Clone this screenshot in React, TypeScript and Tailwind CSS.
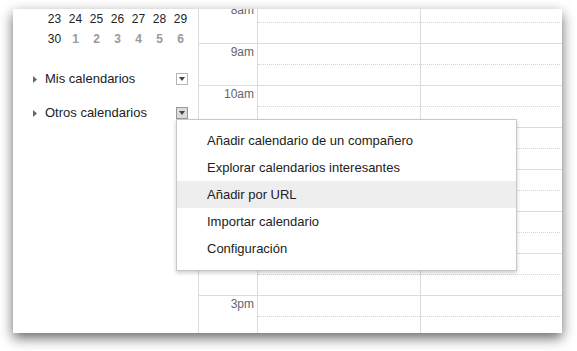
import React from "react";

const hours = ["8am", "9am", "10am", "11am", "12pm", "1pm", "2pm", "3pm"];

const menuItems = [
  "Añadir calendario de un compañero",
  "Explorar calendarios interesantes",
  "Añadir por URL",
  "Importar calendario",
  "Configuración",
];

const week1 = ["23", "24", "25", "26", "27", "28", "29"];
const week2 = ["30", "1", "2", "3", "4", "5", "6"];

function DropButton({ active }: { active?: boolean }) {
  return (
    <div
      className={
        "w-[12px] h-[12px] border flex items-center justify-center " +
        (active ? "bg-[#dcdcdc] border-[#999]" : "bg-white border-[#b5b5b5]")
      }
    >
      <svg width="6" height="4" viewBox="0 0 6 4">
        <path d="M0 0 L6 0 L3 4 Z" fill="#444" />
      </svg>
    </div>
  );
}

function Section({ label, active }: { label: string; active?: boolean }) {
  return (
    <div className="flex items-center h-[20px] pl-[20px] pr-[10px]">
      <svg width="4" height="7" viewBox="0 0 4 7" className="mr-[8px]">
        <path d="M0 0 L4 3.5 L0 7 Z" fill="#666" />
      </svg>
      <span className="text-[13px] text-[#222] flex-1">{label}</span>
      <DropButton active={active} />
    </div>
  );
}

export default function App() {
  return (
    <div
      className="w-[577px] h-[351px] bg-white pt-[9px] pl-[13px] overflow-hidden"
      style={{ fontFamily: '"Liberation Sans", Arial, sans-serif' }}
    >
      <div className="relative w-[549px] h-[324px] bg-white overflow-hidden shadow-[0_5px_12px_rgba(0,0,0,0.6)] flex">
        {/* sidebar */}
        <div className="w-[186px] border-r border-[#dcdcdc] shrink-0">
          <div className="pl-[31px]">
            <div className="grid grid-cols-7 w-[147px] text-[12px] leading-[20px] text-center text-[#222]">
              {week1.map((d) => (
                <span key={d}>{d}</span>
              ))}
              {week2.map((d, i) => (
                <span key={d} className={i === 0 ? "" : "font-bold text-[#9a9a9a]"}>
                  {d}
                </span>
              ))}
            </div>
          </div>
          <div className="mt-[20px] flex flex-col gap-[14px]">
            <Section label="Mis calendarios" />
            <Section label="Otros calendarios" active />
          </div>
        </div>

        {/* time grid */}
        <div className="flex-1 -mt-[8px]">
          {hours.map((h) => (
            <div key={h} className="flex h-[42px] border-t border-[#dcdcdc]">
              <div className="w-[59px] shrink-0 border-r border-[#dcdcdc] text-right pr-[3px] pt-[1px] text-[12px] leading-[14px] text-[#666]">
                {h}
              </div>
              <div className="w-[163px] shrink-0 border-r border-[#dcdcdc] flex flex-col">
                <div className="h-[21px] border-b border-dotted border-[#d6d6d6]" />
              </div>
              <div className="flex-1 flex flex-col mr-[2px]">
                <div className="h-[21px] border-b border-dotted border-[#d6d6d6]" />
              </div>
            </div>
          ))}
        </div>

        {/* dropdown menu */}
        <div className="absolute z-10 left-[163px] top-[110px] w-[341px] bg-white border border-[#c8c8c8] shadow-[0_2px_4px_rgba(0,0,0,0.2)] pt-[7px] pb-[8px]">
          {menuItems.map((item, i) => (
            <div
              key={item}
              className={
                "h-[27px] flex items-center pl-[30px] text-[13px] text-[#222] " +
                (i === 2 ? "bg-[#eeeeee]" : "")
              }
            >
              {item}
            </div>
          ))}
        </div>
      </div>
    </div>
  );
}
